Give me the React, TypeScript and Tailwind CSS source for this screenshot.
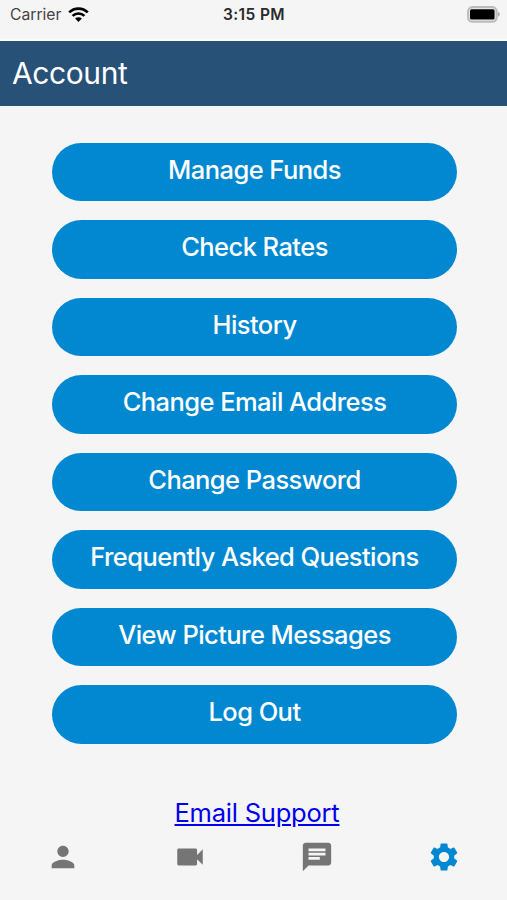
import { MdPerson, MdVideocam, MdChat, MdSettings } from 'react-icons/md';

const menuItems = [
  'Manage Funds',
  'Check Rates',
  'History',
  'Change Email Address',
  'Change Password',
  'Frequently Asked Questions',
  'View Picture Messages',
  'Log Out',
];

const App = () => {
  return (
    <div className="flex h-[900px] w-full flex-col bg-[#f5f5f5] font-['Inter',sans-serif]">
      {/* Status bar */}
      <div className="grid h-[41px] grid-cols-3 border-b-2 border-[#fbfbfb] pt-1 pr-[7px] pl-[10px] text-[#2a2a2a]">
        <div className="flex h-[22px] items-center gap-[6px] text-[15.7px] text-[#444]">
          <span className="w-[52px]">Carrier</span>
          <svg className="mb-[2px]" width="21" height="15" viewBox="0 0 21 15" fill="none" stroke="#000" strokeWidth="2.7">
            <path d="M1.2 5.4a13.2 13.2 0 0 1 18.6 0M4.6 8.9a8.4 8.4 0 0 1 11.8 0" />
            <path d="M10.5 15 7.1 11.6a4.8 4.8 0 0 1 6.8 0Z" fill="#000" stroke="none" />
          </svg>
        </div>
        <div className="flex h-[22px] items-center justify-center pr-[2px] text-[15.5px] font-semibold tracking-[0.4px] whitespace-nowrap">
          3:15 PM
        </div>
        <div className="flex h-[21px] items-center justify-end">
          <svg width="33" height="17" viewBox="0 0 33 17">
            <rect x="1.2" y="1.2" width="28.4" height="14.4" rx="4.2" fill="none" stroke="#bcbcbc" strokeWidth="2.2" />
            <rect x="3" y="3.2" width="24.6" height="10.4" rx="1.5" fill="#000" />
            <path d="M31 5.8v5q1.7-.8 1.7-2.5T31 5.8Z" fill="#aaa" />
          </svg>
        </div>
      </div>

      {/* Header */}
      <header className="flex h-[65px] items-center bg-[#285177] pl-3 text-[30px] tracking-[-0.4px] text-white">
        <h1>Account</h1>
      </header>

      {/* Menu */}
      <main className="flex flex-col items-center gap-[19px] pt-[36.5px] pl-[2px]">
        {menuItems.map((label) => (
          <button
            key={label}
            className="h-[58.5px] w-[405px] rounded-full bg-[#0288d1] pb-[4px] text-[25.5px] font-medium tracking-[-0.56px] text-white"
          >
            {label}
          </button>
        ))}
      </main>

      <a
        href="#"
        className="mt-[53.5px] ml-[7px] self-center text-[25.5px] leading-8 tracking-[-0.22px] text-[#0000ee] underline"
      >
        Email Support
      </a>

      {/* Bottom tabs */}
      <nav className="mt-[11px] grid grid-cols-4 justify-items-center text-[#757575]">
        <MdPerson size={34} />
        <MdVideocam size={34} />
        <MdChat size={34} />
        <MdSettings size={34} className="text-[#0288d1]" />
      </nav>
    </div>
  );
};

export default App;
